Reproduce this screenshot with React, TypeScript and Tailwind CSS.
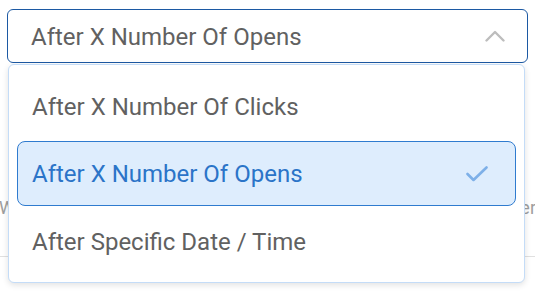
import React from "react";

export default function App() {
  const font = { fontFamily: "Roboto, 'Noto Sans', sans-serif" };
  return (
    <div className="relative w-[535px] h-[303px] bg-white overflow-hidden" style={font}>
      {/* Background content */}
      <div className="flex flex-col">
        <div className="mt-[9px] mx-[7px] h-[54px] rounded-[6px] border border-[#1c59a3] bg-white flex items-center pl-[23px] pr-[22px] justify-between">
          <span className="text-[24px] text-[#616161] leading-none pt-[1px]">After X Number Of Opens</span>
          <svg width="20" height="12" viewBox="0 0 20 12" fill="none">
            <path d="M1.5 10.5 L10 2 L18.5 10.5" stroke="#bdbdbd" strokeWidth="2.4" strokeLinecap="round" strokeLinejoin="round" />
          </svg>
        </div>
        <div className="mt-[135px] flex justify-between text-[18px] leading-[20px] text-[#9e9e9e]">
          <span className="-ml-[1px]">W</span>
          <span className="-mr-[1px]">er</span>
        </div>
        <div className="mt-[38px] h-px bg-[#e0e0e0]" />
      </div>

      {/* Dropdown menu overlay */}
      <div className="absolute left-[8px] top-[64px] w-[517px] h-[219px] rounded-[6px] border border-[#c4dcf7] bg-white shadow-[0_2px_6px_rgba(0,0,0,0.12)] p-[8px] flex flex-col gap-[3px]">
        <div className="h-[65px] flex items-center pl-[15px] pt-[2px] text-[24px] text-[#616161]">
          After X Number Of Clicks
        </div>
        <div className="h-[65px] flex items-center justify-between pl-[14px] pr-[27px] pt-[1px] rounded-[8px] border border-[#2f7bcf] bg-[#deedfd] text-[24px] text-[#2b74c8]">
          <span>After X Number Of Opens</span>
          <svg width="22" height="16" viewBox="0 0 22 16" fill="none">
            <path d="M1.5 8 L7.5 14 L20.5 1.5" stroke="#7eb0e8" strokeWidth="2.6" strokeLinecap="round" strokeLinejoin="round" />
          </svg>
        </div>
        <div className="h-[65px] flex items-center pl-[15px] pt-[1px] text-[24px] text-[#616161]">
          After Specific Date / Time
        </div>
      </div>
    </div>
  );
}
